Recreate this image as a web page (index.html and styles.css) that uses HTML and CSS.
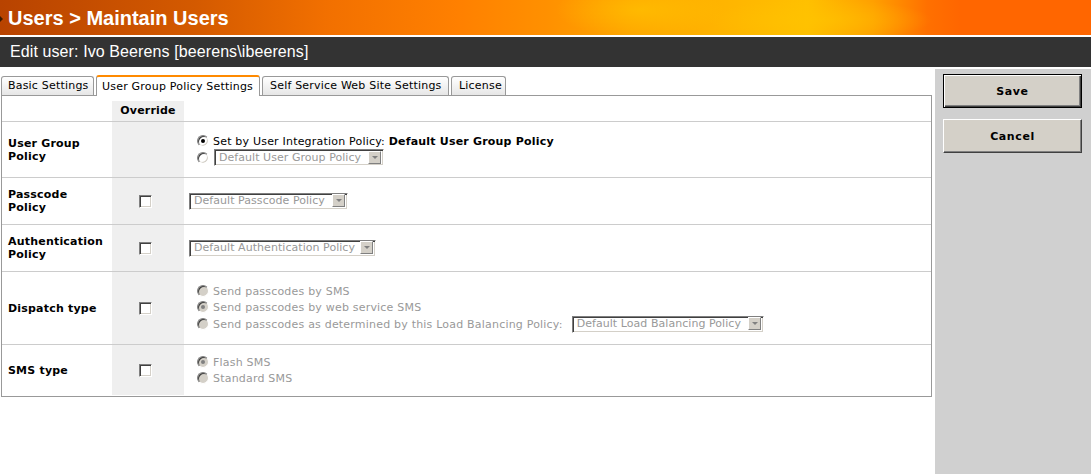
FILE: index.html
```html
<!DOCTYPE html>
<html>
<head>
<meta charset="utf-8">
<link rel="stylesheet" href="styles.css">
</head>
<body>
<div class="header">
  <span class="hdr-arrow"></span>
  <h1 class="title">Users &gt; Maintain Users</h1>
</div>
<div class="subheader">Edit user: Ivo Beerens [beerens\ibeerens]</div>
<div class="page">
  <div class="main">
    <div class="tabs">
      <div class="tab t1">Basic Settings</div>
      <div class="tab t2 active">User Group Policy Settings</div>
      <div class="tab t3">Self Service Web Site Settings</div>
      <div class="tab t4">License</div>
    </div>
    <div class="box">
      <div class="row head">
        <div class="lbl"></div>
        <div class="ovr ovr-head">Override</div>
        <div class="val"></div>
      </div>
      <div class="row r1">
        <div class="lbl">User Group Policy</div>
        <div class="ovr"></div>
        <div class="val">
          <div class="line"><span class="radio checked"></span><span class="txt">Set by User Integration Policy: <b>Default User Group Policy</b></span></div>
          <div class="line"><span class="radio"></span><span class="select w-ugp"><span class="sel-txt">Default User Group Policy</span><span class="sel-btn"></span></span></div>
        </div>
      </div>
      <div class="row r2">
        <div class="lbl">Passcode Policy</div>
        <div class="ovr"><span class="check"></span></div>
        <div class="val"><span class="select w-pp"><span class="sel-txt">Default Passcode Policy</span><span class="sel-btn"></span></span></div>
      </div>
      <div class="row r3">
        <div class="lbl">Authentication Policy</div>
        <div class="ovr"><span class="check"></span></div>
        <div class="val"><span class="select w-ap"><span class="sel-txt">Default Authentication Policy</span><span class="sel-btn"></span></span></div>
      </div>
      <div class="row r4">
        <div class="lbl">Dispatch type</div>
        <div class="ovr"><span class="check"></span></div>
        <div class="val">
          <div class="line dis"><span class="radio disabled"></span><span class="txt">Send passcodes by SMS</span></div>
          <div class="line dis"><span class="radio disabled checked"></span><span class="txt">Send passcodes by web service SMS</span></div>
          <div class="line dis tall"><span class="radio disabled"></span><span class="txt">Send passcodes as determined by this Load Balancing Policy:</span><span class="select w-lb"><span class="sel-txt">Default Load Balancing Policy</span><span class="sel-btn"></span></span></div>
        </div>
      </div>
      <div class="row r5">
        <div class="lbl">SMS type</div>
        <div class="ovr"><span class="check"></span></div>
        <div class="val">
          <div class="line dis"><span class="radio disabled checked"></span><span class="txt">Flash SMS</span></div>
          <div class="line dis"><span class="radio disabled"></span><span class="txt">Standard SMS</span></div>
        </div>
      </div>
    </div>
  </div>
  <div class="sidebar">
    <div class="btn default">Save</div>
    <div class="btn">Cancel</div>
  </div>
</div>
</body>
</html>
```

FILE: styles.css
```css
* { box-sizing: border-box; }
html, body { margin: 0; padding: 0; background: #fff; }
body {
  font-family: "DejaVu Sans", Verdana, sans-serif;
  font-size: 11px;
  letter-spacing: 0.2px;
  color: #000;
  width: 1091px;
  height: 474px;
  overflow: hidden;
}

.header {
  height: 37px;
  border-bottom: 2px solid #fff;
  background:
    radial-gradient(ellipse 120px 40px at 640px 10px, rgba(255,200,0,0.55), rgba(255,200,0,0) 70%),
    radial-gradient(ellipse 160px 30px at 820px 20px, rgba(255,196,0,0.6), rgba(255,196,0,0) 70%),
    linear-gradient(90deg, #b84300 0%, #d45a00 18%, #f27000 30%, #ff8000 42%, #ff9000 50%, #ffa600 58%, #ffb400 66%, #ffc000 74%, #ffa000 80%, #ff7000 85%, #ff6600 88%, #ff6600 100%);
  display: flex;
  align-items: flex-start;
  position: relative;
}
.hdr-arrow {
  position: absolute;
  left: 0;
  top: 16px;
  width: 0;
  height: 0;
  border-top: 3px solid transparent;
  border-bottom: 3px solid transparent;
  border-left: 3px solid #3a1a00;
}
.title {
  margin: 0;
  padding: 3px 0 0 8px;
  font-family: "Liberation Sans", Arial, sans-serif;
  font-weight: bold;
  font-size: 20px;
  letter-spacing: 0;
  line-height: 30px;
  color: #fff;
}
.subheader {
  height: 30px;
  background: #333;
  color: #fff;
  font-family: "Liberation Sans", Arial, sans-serif;
  font-size: 16px;
  letter-spacing: 0.1px;
  line-height: 30px;
  padding-left: 10px;
}

.page {
  display: flex;
  height: 407px;
}
.main {
  width: 935px;
  padding: 8px 3px 0 1px;
}
.sidebar {
  margin-top: 2px;
  width: 156px;
  background: #d0d0d0;
  padding: 5px 9px 0 8px;
  display: flex;
  flex-direction: column;
  gap: 11px;
}

.tabs {
  display: flex;
  gap: 2px;
  height: 20px;
  align-items: flex-end;
  position: relative;
  z-index: 1;
}
.tab {
  height: 19px;
  border: 1px solid #999;
  border-bottom: none;
  border-radius: 3px 3px 0 0;
  background: linear-gradient(#ffffff, #e6e6e6);
  padding-left: 6px;
  line-height: 18px;
  white-space: nowrap;
}
.tab.active {
  height: 21px;
  margin-bottom: -1px;
  background: #fff;
  border-top: 2px solid #ff8a00;
  padding-left: 5px;
  line-height: 19px;
}
.t1 { width: 93px; }
.t2 { width: 164px; }
.t3 { width: 187px; padding-left: 7px; }
.t4 { width: 55px; padding-left: 7px; }

.box {
  border: 1px solid #999;
  height: 302px;
  padding-top: 5px;
}
.row {
  display: grid;
  grid-template-columns: 110px 72px 1fr;
}
.row + .row { border-top: 1px solid #ccc; }
.head { height: 20px; }
.r1 { height: 56px; }
.r2 { height: 47px; }
.r3 { height: 47px; }
.r4 { height: 73px; }
.r5 { height: 51px; }

.lbl {
  font-weight: bold;
  padding-left: 6px;
  padding-right: 8px;
  display: flex;
  align-items: center;
  line-height: 13px;
}
.ovr {
  background: #efefef;
  display: flex;
  align-items: center;
  justify-content: center;
}
.ovr-head {
  font-weight: bold;
  align-items: flex-start;
  padding-top: 3px;
}
.val {
  padding-left: 6px;
  display: flex;
  flex-direction: column;
  justify-content: center;
}
.line {
  display: flex;
  align-items: center;
  height: 16px;
  white-space: nowrap;
}
.r1 .line + .line { height: 17px; }
.line.tall { height: 18px; }
.line.dis { color: #999; }
.txt { margin-left: 4px; }

.radio {
  width: 12px;
  height: 12px;
  margin-left: 7px;
  border-radius: 50%;
  border: 1px solid;
  border-color: #808080 #ffffff #ffffff #808080;
  box-shadow: inset 1px 1px 0 #404040, inset -1px -1px 0 #d4d0c8;
  background: #fff;
  position: relative;
  flex: none;
}
.radio.disabled { background: #d4d0c8; }
.radio.checked::after {
  content: "";
  position: absolute;
  left: 3px;
  top: 3px;
  width: 4px;
  height: 4px;
  border-radius: 50%;
  background: #000;
}
.radio.disabled.checked::after { background: #808080; }
.radio + .select { margin-left: 5px; }
.txt + .select { margin-left: 9px; }

.select {
  display: inline-flex;
  align-items: center;
  height: 17px;
  border: 1px solid;
  border-color: #808080 #ffffff #ffffff #808080;
  box-shadow: inset 1px 1px 0 #404040, inset -1px -1px 0 #d4d0c8;
  background: #fff;
  padding: 1px 2px 2px 2px;
  color: #999;
  letter-spacing: 0.05px;
  flex: none;
}
.sel-txt {
  flex: 1;
  padding-left: 2px;
  white-space: nowrap;
  overflow: hidden;
  line-height: 13px;
}
.sel-btn {
  width: 13px;
  height: 13px;
  background: #d4d0c8;
  border: 1px solid;
  border-color: #ffffff #808080 #808080 #ffffff;
  position: relative;
  flex: none;
}
.sel-btn::after {
  content: "";
  position: absolute;
  left: 3px;
  top: 4px;
  border-left: 3px solid transparent;
  border-right: 3px solid transparent;
  border-top: 3px solid #808080;
}
.val > .select { margin-left: -1px; }
.w-ugp { width: 170px; }
.w-pp { width: 159px; }
.w-ap { width: 187px; }
.w-lb { width: 192px; }

.check {
  width: 13px;
  height: 13px;
  border: 1px solid;
  border-color: #808080 #ffffff #ffffff #808080;
  box-shadow: inset 1px 1px 0 #404040, inset -1px -1px 0 #d4d0c8;
  background: #fff;
  margin-right: 5px;
}

.btn {
  height: 34px;
  background: #d4d0c8;
  border: 1px solid;
  border-color: #ffffff #404040 #404040 #ffffff;
  box-shadow: inset -1px -1px 0 #808080;
  display: flex;
  align-items: center;
  justify-content: center;
  font-weight: bold;
  font-size: 11px;
  letter-spacing: 0.6px;
}
.btn.default {
  border: 1px solid #000;
  box-shadow: inset 1px 1px 0 #ffffff, inset -1px -1px 0 #404040, inset -2px -2px 0 #808080;
}
```
